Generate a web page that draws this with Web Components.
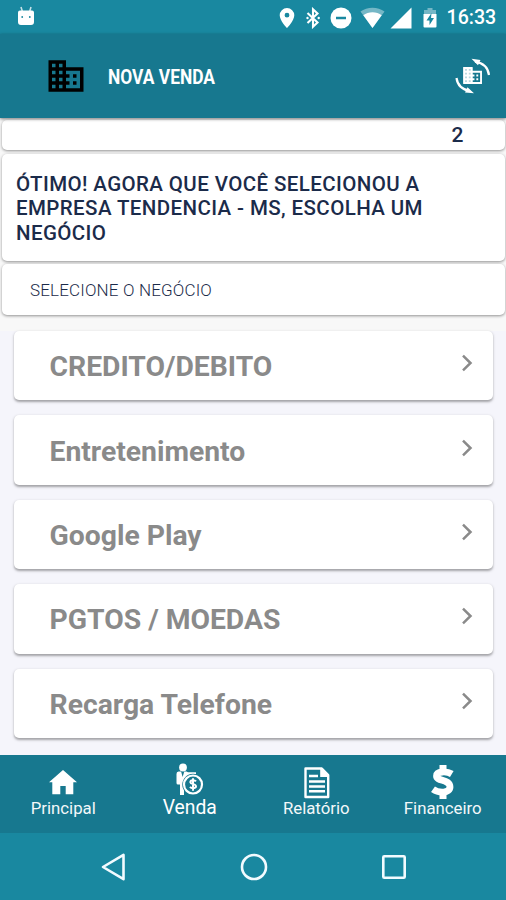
<!DOCTYPE html>
<html lang="pt-BR">
<head>
<meta charset="utf-8">
<title>Nova Venda</title>
<style>
  body {
    margin: 0;
    font-family: Roboto, "Liberation Sans", sans-serif;
  }
</style>
</head>
<body>
<nova-venda></nova-venda>

<script>
const DOMAIN = "M12 7V3H2v18h20V7H12zM6 19H4v-2h2v2zm0-4H4v-2h2v2zm0-4H4V9h2v2zm0-4H4V5h2v2zm4 12H8v-2h2v2zm0-4H8v-2h2v2zm0-4H8V9h2v2zm0-4H8V5h2v2zm10 12h-8v-2h2v-2h-2v-2h2v-2h-2V9h8v10zm-2-8h-2v2h2v-2zm0 4h-2v2h2v-2z";

// [width, height, svg content]
const ICONS = {
  droid: [18, 20, `<path d="M4 1l1.500 5M14 1l-1.500 5" stroke="currentColor" stroke-width="1.600" opacity=".75"/><path d="M3 4.500h12a2 2 0 0 1 2 2V16a3 3 0 0 1-3 3H4a3 3 0 0 1-3-3V6.500a2 2 0 0 1 2-2z"/><circle cx="5.200" cy="11" r=".9" fill="#1988a0"/><circle cx="12.800" cy="11" r=".9" fill="#1988a0"/>`],
  pin: [16, 22, `<path fill-rule="evenodd" d="M8 1a7.300 7.300 0 0 0-7.300 7.300C.7 13.800 8 21 8 21s7.300-7.200 7.300-12.700A7.300 7.300 0 0 0 8 1zm0 4.800a2.400 2.400 0 1 1 0 4.800 2.400 2.400 0 0 1 0-4.800z"/>`],
  bluetooth: [14, 22, `<path d="M1.500 6l10 9.500L7 19.700V2.300l4.500 4.200-10 9.500" fill="none" stroke="currentColor" stroke-width="2.100"/><circle cx="1.500" cy="11" r="1.200"/><circle cx="12.700" cy="11" r="1.200"/>`],
  dnd: [22, 22, `<circle cx="11" cy="11" r="10.500"/><path d="M6 11h10" stroke="#1988a0" stroke-width="2.500"/>`],
  wifi: [25, 22, `<path d="M.5 4.500C7-.6 18-.6 24.500 4.500L12.500 21z" opacity=".4"/><path d="M3.300 8.300c5-4 13.400-4 18.400 0L12.500 21z"/>`],
  signal: [22, 22, `<path d="M21.500.5v21H.5z"/>`],
  battery: [14, 21, `<path d="M4.500 1h5v2H13v5H1V3h3.500z" opacity=".4"/><path d="M.5 7h13v12.500a1 1 0 0 1-1 1h-11a1 1 0 0 1-1-1z"/><path d="M8.500 6l-5 7.500h3V18l4.500-7H8z" fill="#1988a0"/>`],
  domain: [24, 24, `<path d="${DOMAIN}"/>`],
  swap: [36, 36, `<path transform="translate(6.300 6.200) scale(.94)" d="${DOMAIN}"/><path d="M8.500 9.500h9v15.500h-9z" opacity=".7"/><path d="M20 3.600C27 4.700 33 9 34 17M1.500 20c1 8 7 11.800 13.500 13" fill="none" stroke="currentColor" stroke-width="2.200"/><path d="M16.500.8l9 1.200-2.500 5.300zM19 35.300l-9-.8 2.500-5.300z"/>`],
  chevron: [12, 18, `<path d="M2 1.700L9.500 9 2 16.300" fill="none" stroke="currentColor" stroke-width="2.500"/>`],
  home: [28, 26, `<path d="M14 0l14 12.300h-3.700v11.900h-7.600V16h-5.400v8.200h-8V12.300H0z"/>`],
  seller: [30, 34, `<circle cx="8" cy="4.500" r="3.900"/><path d="M3.500 8.500h2.600l1.500 5.500L9.300 8.500h2.200l1.500.8h8v3.200h-7.500v2.500l-4.500 7V32H5V21.500H3a1.500 1.500 0 0 1-1.500-1.500v-9a2.500 2.500 0 0 1 2-2.500z"/><circle cx="18" cy="21.500" r="10.700" fill="#17788f"/><circle cx="18" cy="21.500" r="9" fill="none" stroke="currentColor" stroke-width="2.200"/><path d="M21 18.400c-1.500-2-5.800-1.500-5.600.9.200 2.200 5.600 1.500 5.600 4 0 2.300-4.500 2.500-6 .5M18 15.300v12.400" fill="none" stroke="currentColor" stroke-width="2"/>`],
  report: [27, 32, `<path d="M2.500 1.500h16.300l6.400 6.500v22H2.500z" fill="none" stroke="currentColor" stroke-width="2.400" stroke-linejoin="round"/><path d="M17.200 1h2l6.500 6.700v2.200h-8.500z"/><path d="M6 9h9M6 14.500h16M6 19.400h16M6 24.300h16" stroke="currentColor" stroke-width="2.500"/>`],
  money: [24, 36, `<path d="M20.800 10C16 7 5.500 7 5.500 12c0 5.500 13.500 3 13.500 11C19 29.200 8 29.500 2 25.300" fill="none" stroke="currentColor" stroke-width="6.800"/><path d="M8.500 1h7v6h-7zM8.500 27h7v8h-7z"/>`],
  back: [26, 28, `<path d="M2 14L22.500 1.800v24.400z" fill="none" stroke="currentColor" stroke-width="2.600" stroke-linejoin="round"/>`],
  circle: [28, 28, `<circle cx="14" cy="14" r="12" fill="none" stroke="currentColor" stroke-width="2.600"/>`],
  square: [26, 26, `<rect x="2.300" y="2.300" width="21.400" height="21.400" rx="1" fill="none" stroke="currentColor" stroke-width="2.600"/>`]
};

class AppIcon extends HTMLElement {
  constructor() {
    super();
    this.attachShadow({ mode: "open" });
  }

  connectedCallback() {
    const [w, h, body] = ICONS[this.getAttribute("name")];
    const width = Number(this.getAttribute("size")) || w;
    this.shadowRoot.innerHTML = `
      <style>
        :host { display: block; flex: none; }
        svg { display: block; fill: currentColor; }
      </style>
      <svg width="${width}" height="${width * h / w}" viewBox="0 0 ${w} ${h}">${body}</svg>
    `;
  }
}

class StatusBar extends HTMLElement {
  constructor() {
    super();
    this.attachShadow({ mode: "open" });
    this.shadowRoot.innerHTML = `
      <style>
        :host {
          display: flex;
          align-items: center;
          box-sizing: border-box;
          height: 34px;
          padding: 0 11px 0 17px;
          background: #1988a0;
          color: #fff;
        }
        .droid { margin-top: -2px; }
        .icons {
          display: flex;
          align-items: center;
          margin-left: auto;
          margin-right: 10px;
          padding-top: 1px;
        }
        .icons > * { margin-left: 9px; }
        .icons > :nth-child(2) { margin-left: 11px; }
        .icons > :nth-child(3) { margin-left: 10px; }
        .icons > :nth-child(4) { margin-left: 8px; }
        .icons > :nth-child(5) { margin-left: 5px; }
        .icons > :nth-child(6) { margin-left: 11px; }
        .time {
          font-size: 19.600px;
          font-weight: 500;
          line-height: 24px;
          padding-top: 2px;
          width: 48.500px;
          white-space: nowrap;
        }
      </style>
      <app-icon class="droid" name="droid"></app-icon>
      <div class="icons">
        <app-icon name="pin"></app-icon>
        <app-icon name="bluetooth"></app-icon>
        <app-icon name="dnd"></app-icon>
        <app-icon name="wifi"></app-icon>
        <app-icon name="signal"></app-icon>
        <app-icon name="battery"></app-icon>
      </div>
      <span class="time"><slot></slot></span>
    `;
  }
}

class AppHeader extends HTMLElement {
  constructor() {
    super();
    this.attachShadow({ mode: "open" });
    this.shadowRoot.innerHTML = `
      <style>
        :host {
          display: flex;
          align-items: center;
          box-sizing: border-box;
          height: 84px;
          padding: 0 15px 0 44.500px;
          background: #17788f;
          color: #fff;
          position: relative;
          box-shadow: 0 1px 3px rgba(0, 0, 0, 0.5);
        }
        .logo { color: #000; }
        h1 {
          margin: 2px 0 0 21px;
          font-size: 20.500px;
          font-weight: 700;
          transform: scaleX(0.848);
          transform-origin: left;
          white-space: nowrap;
        }
        .swap { margin-left: auto; }
      </style>
      <app-icon class="logo" name="domain" size="42"></app-icon>
      <h1><slot></slot></h1>
      <app-icon class="swap" name="swap"></app-icon>
    `;
  }
}

class InfoCard extends HTMLElement {
  constructor() {
    super();
    this.attachShadow({ mode: "open" });
    this.shadowRoot.innerHTML = `
      <style>
        :host {
          display: block;
          box-sizing: border-box;
          background: #fff;
          border-radius: 5px;
          box-shadow: 0 1px 3px rgba(0, 0, 0, 0.42);
          color: #1b2b4a;
        }
      </style>
      <slot></slot>
    `;
  }
}

class OptionRow extends HTMLElement {
  constructor() {
    super();
    this.attachShadow({ mode: "open" });
    this.shadowRoot.innerHTML = `
      <style>
        :host {
          display: flex;
          align-items: center;
          justify-content: space-between;
          box-sizing: border-box;
          height: 69.400px;
          padding: 0 20px 0 35.500px;
          background: #fff;
          border-radius: 5px;
          box-shadow: 0 1.500px 2.500px rgba(0, 0, 0, 0.34);
          color: #8a8a8a;
        }
        .label {
          font-size: 28.300px;
          font-weight: 700;
          line-height: 34px;
          padding-top: 3px;
        }
        app-icon { margin-top: -5px; }
      </style>
      <span class="label"><slot></slot></span>
      <app-icon name="chevron"></app-icon>
    `;
  }
}

class TabItem extends HTMLElement {
  constructor() {
    super();
    this.attachShadow({ mode: "open" });
    this.shadowRoot.innerHTML = `
      <style>
        :host {
          display: flex;
          flex-direction: column;
          align-items: center;
          flex: 1 1 0;
          color: #fff;
          font-size: 16.800px;
        }
        .icon {
          display: flex;
          flex: none;
          height: 42px;
          align-items: flex-end;
        }
        .icon app-icon { margin-bottom: var(--lift, 0); }
        .label { line-height: 22px; height: 22px; opacity: .95; }
        :host([active]) .label { font-size: 19.300px; opacity: 1; }
      </style>
      <div class="icon"><app-icon name="${this.getAttribute("icon")}"></app-icon></div>
      <span class="label"><slot></slot></span>
    `;
  }
}

class NavBar extends HTMLElement {
  constructor() {
    super();
    this.attachShadow({ mode: "open" });
    this.shadowRoot.innerHTML = `
      <style>
        :host {
          display: flex;
          align-items: center;
          justify-content: space-between;
          box-sizing: border-box;
          height: 67px;
          padding: 0 99px 0 101px;
          background: #1988a0;
          color: #f2fbff;
        }
      </style>
      <app-icon name="back"></app-icon>
      <app-icon name="circle"></app-icon>
      <app-icon name="square"></app-icon>
    `;
  }
}

class NovaVenda extends HTMLElement {
  constructor() {
    super();
    this.attachShadow({ mode: "open" });
    this.render();
  }

  render() {
    this.shadowRoot.innerHTML = `
      <style>
        :host {
          display: flex;
          flex-direction: column;
          width: 506px;
          height: 900px;
          overflow: hidden;
          background: #f5f5fb;
        }
        .info {
          display: flex;
          flex-direction: column;
          box-sizing: border-box;
          height: 213px;
          padding: 2px 1px 0 2px;
          background: #f8f8f8;
        }
        .count {
          height: 29.500px;
          padding: 2px 41.500px 0 0;
          text-align: right;
          font-size: 21px;
          font-weight: 500;
          line-height: 26px;
        }
        .message {
          height: 107px;
          margin-top: 4.500px;
          padding: 17.500px 14px 0;
          font-size: 20.500px;
          font-weight: 500;
          letter-spacing: 0.400px;
          line-height: 24.600px;
          white-space: nowrap;
        }
        .subtitle {
          height: 51.500px;
          margin-top: 2.500px;
          padding: 15px 28px 0;
          font-size: 17px;
          font-weight: 300;
          letter-spacing: 0.160px;
          line-height: 22px;
        }
        .list {
          display: flex;
          flex-direction: column;
          gap: 15px;
          flex: 1;
          padding: 0 13px 0 14px;
        }
        .tabs {
          display: flex;
          height: 78.500px;
          flex: none;
          background: #17788f;
        }
        status-bar, app-header, .info, nav-bar { flex: none; }
      </style>
      <status-bar>16:33</status-bar>
      <app-header>NOVA VENDA</app-header>
      <div class="info">
        <info-card class="count">2</info-card>
        <info-card class="message">ÓTIMO! AGORA QUE VOCÊ SELECIONOU A<br>EMPRESA TENDENCIA - MS, ESCOLHA UM<br>NEGÓCIO</info-card>
        <info-card class="subtitle">SELECIONE O NEGÓCIO</info-card>
      </div>
      <div class="list">
        <option-row>CREDITO/DEBITO</option-row>
        <option-row>Entretenimento</option-row>
        <option-row>Google Play</option-row>
        <option-row>PGTOS / MOEDAS</option-row>
        <option-row>Recarga Telefone</option-row>
      </div>
      <div class="tabs">
        <tab-item icon="home" style="--lift: 0.500px">Principal</tab-item>
        <tab-item icon="seller" active>Venda</tab-item>
        <tab-item icon="report" style="--lift: -2px">Relatório</tab-item>
        <tab-item icon="money" style="--lift: -3.500px">Financeiro</tab-item>
      </div>
      <nav-bar></nav-bar>
    `;
  }
}

customElements.define("app-icon", AppIcon);
customElements.define("status-bar", StatusBar);
customElements.define("app-header", AppHeader);
customElements.define("info-card", InfoCard);
customElements.define("option-row", OptionRow);
customElements.define("tab-item", TabItem);
customElements.define("nav-bar", NavBar);
customElements.define("nova-venda", NovaVenda);
</script>
</body>
</html>
